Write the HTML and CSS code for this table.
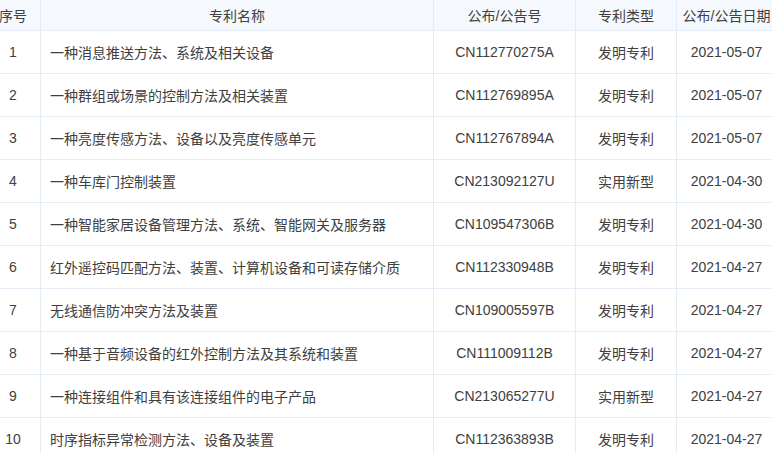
FILE: index.html
```html
<!DOCTYPE html>
<html lang="zh-CN">
<head>
<meta charset="utf-8">
<title>专利列表</title>
<link rel="stylesheet" href="styles.css">
</head>
<body>
<div class="table">
  <div class="row head">
    <div class="cell c1">序号</div>
    <div class="cell c2">专利名称</div>
    <div class="cell c3">公布/公告号</div>
    <div class="cell c4">专利类型</div>
    <div class="cell c5">公布/公告日期</div>
  </div>
  <div class="row">
    <div class="cell c1">1</div>
    <div class="cell c2 name">一种消息推送方法、系统及相关设备</div>
    <div class="cell c3">CN112770275A</div>
    <div class="cell c4">发明专利</div>
    <div class="cell c5">2021-05-07</div>
  </div>
  <div class="row">
    <div class="cell c1">2</div>
    <div class="cell c2 name">一种群组或场景的控制方法及相关装置</div>
    <div class="cell c3">CN112769895A</div>
    <div class="cell c4">发明专利</div>
    <div class="cell c5">2021-05-07</div>
  </div>
  <div class="row">
    <div class="cell c1">3</div>
    <div class="cell c2 name">一种亮度传感方法、设备以及亮度传感单元</div>
    <div class="cell c3">CN112767894A</div>
    <div class="cell c4">发明专利</div>
    <div class="cell c5">2021-05-07</div>
  </div>
  <div class="row">
    <div class="cell c1">4</div>
    <div class="cell c2 name">一种车库门控制装置</div>
    <div class="cell c3">CN213092127U</div>
    <div class="cell c4">实用新型</div>
    <div class="cell c5">2021-04-30</div>
  </div>
  <div class="row">
    <div class="cell c1">5</div>
    <div class="cell c2 name">一种智能家居设备管理方法、系统、智能网关及服务器</div>
    <div class="cell c3">CN109547306B</div>
    <div class="cell c4">发明专利</div>
    <div class="cell c5">2021-04-30</div>
  </div>
  <div class="row">
    <div class="cell c1">6</div>
    <div class="cell c2 name">红外遥控码匹配方法、装置、计算机设备和可读存储介质</div>
    <div class="cell c3">CN112330948B</div>
    <div class="cell c4">发明专利</div>
    <div class="cell c5">2021-04-27</div>
  </div>
  <div class="row">
    <div class="cell c1">7</div>
    <div class="cell c2 name">无线通信防冲突方法及装置</div>
    <div class="cell c3">CN109005597B</div>
    <div class="cell c4">发明专利</div>
    <div class="cell c5">2021-04-27</div>
  </div>
  <div class="row">
    <div class="cell c1">8</div>
    <div class="cell c2 name">一种基于音频设备的红外控制方法及其系统和装置</div>
    <div class="cell c3">CN111009112B</div>
    <div class="cell c4">发明专利</div>
    <div class="cell c5">2021-04-27</div>
  </div>
  <div class="row">
    <div class="cell c1">9</div>
    <div class="cell c2 name">一种连接组件和具有该连接组件的电子产品</div>
    <div class="cell c3">CN213065277U</div>
    <div class="cell c4">实用新型</div>
    <div class="cell c5">2021-04-27</div>
  </div>
  <div class="row">
    <div class="cell c1">10</div>
    <div class="cell c2 name">时序指标异常检测方法、设备及装置</div>
    <div class="cell c3">CN112363893B</div>
    <div class="cell c4">发明专利</div>
    <div class="cell c5">2021-04-27</div>
  </div>
</div>
</body>
</html>
```

FILE: styles.css
```css
html, body {
  margin: 0;
  padding: 0;
  background: #ffffff;
  overflow: hidden;
}

body {
  font-family: "Liberation Sans", "Noto Sans CJK SC", sans-serif;
  font-size: 14px;
  color: #404040;
}

.table {
  margin-left: -14px;
  width: 791px;
}

.row {
  display: grid;
  grid-template-columns: 55px 393px 142px 101px 100px;
  height: 43px;
  box-sizing: border-box;
  border-bottom: 1px solid #e3ecf7;
}

.row.head {
  height: 31px;
  background: #f5f8fd;
}

.cell {
  box-sizing: border-box;
  border-right: 1px solid #e3ecf7;
  display: flex;
  align-items: center;
  justify-content: center;
  white-space: nowrap;
  overflow: visible;
}

.cell.name {
  justify-content: flex-start;
  padding-left: 9px;
}
```
